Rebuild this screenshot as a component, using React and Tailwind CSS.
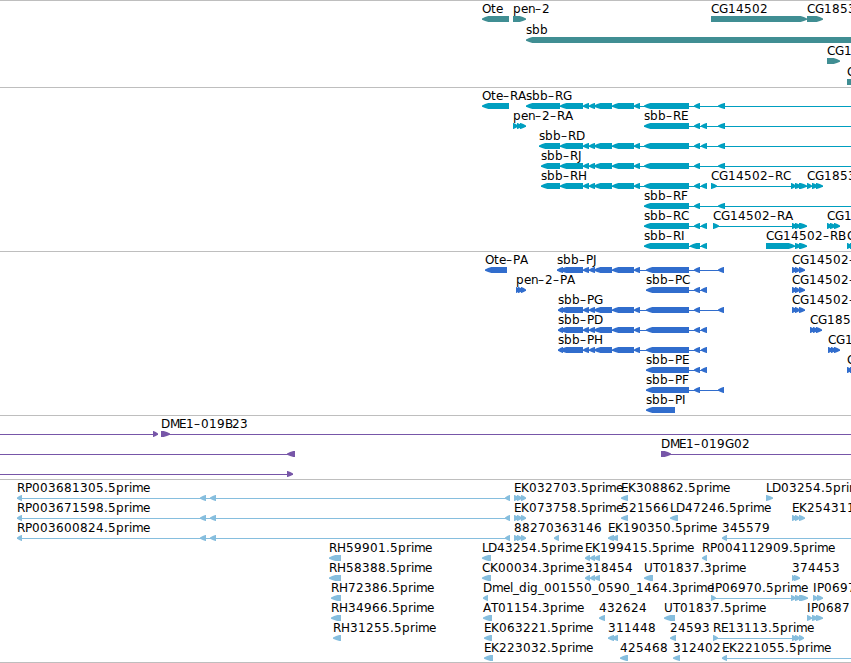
import React from "react";

const WIDTH = 851;
const END = 870;

// whole pixel glyph advances of the 12px label font
const ADVANCE = {
  A: 8, B: 7, C: 8, D: 9, E: 7, F: 7, G: 9, H: 9, I: 4, J: 4, K: 8, L: 6,
  M: 9, O: 9, P: 7, R: 8, T: 7, U: 9, a: 7, b: 8, d: 8, e: 7, g: 8, i: 3,
  l: 3, m: 11, n: 7, p: 8, r: 5, s: 6, t: 5, ".": 4, "-": 7, _: 6,
};

// exons shared by the long sbb transcripts
const SBB = [[560, 583], [583, 589], [589, 595], [594, 612], [612, 634], [634, 640]];
const RP = [[17, 22], [200, 206], [210, 216], [505, 510]];
const TRIO = [[792, 797], [795, 800], [799, 805]];
const EK = [[514, 519], [517, 522], [521, 526]];

// feature: [row, label, direction, blocks, line start, line end]
const tracks = [
  {
    name: "genes",
    color: "#408e93",
    height: 86,
    rowHeight: 21,
    features: [
      [0, "Ote", "left", [[482, 509]]],
      [0, "pen-2", "right", [[513, 526]]],
      [0, "CG14502", "right", [[711, 807]]],
      [0, "CG1853", "right", [[807, 823]]],
      [1, "sbb", "left", [[526, END]]],
      [2, "CG1", "right", [[827, 840]]],
      [3, "C", "right", [[847, END]]],
    ],
  },
  {
    name: "transcripts",
    color: "#009fc0",
    height: 163,
    rowHeight: 20,
    features: [
      [0, "Ote-RA", "left", [[482, 509]]],
      [0, "sbb-RG", "left", [[526, 560], ...SBB, [644, 689], [694, 700], [718, 725]], 526, END],
      [1, "pen-2-RA", "right", [[513, 518], [517, 522], [520, 526]]],
      [1, "sbb-RE", "left", [[644, 689], [694, 700], [701, 707], [718, 725]], 644, END],
      [2, "sbb-RD", "left", [[539, 560], ...SBB, [644, 689], [694, 700], [701, 707], [718, 725]], 539, END],
      [3, "sbb-RJ", "left", [[541, 560], ...SBB, [644, 689], [694, 700], [718, 725]], 541, END],
      [4, "sbb-RH", "left", [[541, 560], ...SBB, [644, 689], [694, 700], [701, 707]]],
      [4, "CG14502-RC", "right", [[711, 717], [791, 796], [795, 801], [799, 807]]],
      [4, "CG1853", "right", [[807, 812], [812, 818], [816, 823]]],
      [5, "sbb-RF", "left", [[644, 689], [694, 700], [718, 725]], 644, END],
      [6, "sbb-RC", "left", [[644, 689], [694, 700], [701, 707]]],
      [6, "CG14502-RA", "right", [[713, 719], [792, 797], [795, 801], [799, 807]]],
      [6, "CG1", "right", [[827, 832], [830, 836], [834, 840]]],
      [7, "sbb-RI", "left", [[644, 689], [690, 700], [701, 707]]],
      [7, "CG14502-RB", "right", [[766, 795], [795, 801], [799, 807]]],
      [7, "C", "right", [[847, 852], [850, 856]]],
    ],
  },
  {
    name: "proteins",
    color: "#316dcd",
    height: 163,
    rowHeight: 20,
    features: [
      [0, "Ote-PA", "left", [[485, 507]]],
      [0, "sbb-PJ", "left", [[557, 563], ...SBB, [646, 689], [694, 700], [718, 724]]],
      [0, "CG14502-", "right", TRIO],
      [1, "pen-2-PA", "right", [[516, 520], [518, 523], [521, 526]]],
      [1, "sbb-PC", "left", [[646, 689], [694, 700], [701, 707]]],
      [1, "CG14502-", "right", TRIO],
      [2, "sbb-PG", "left", [[558, 563], ...SBB, [646, 689], [694, 700], [718, 724]]],
      [2, "CG14502-", "right", TRIO],
      [3, "sbb-PD", "left", [[558, 563], ...SBB, [646, 689], [694, 700], [701, 707]]],
      [3, "CG185", "right", [[810, 815], [813, 818], [816, 822]]],
      [4, "sbb-PH", "left", [[558, 563], ...SBB, [646, 689], [694, 700], [701, 707]]],
      [4, "CG1", "right", [[828, 833], [831, 836], [834, 840]]],
      [5, "sbb-PE", "left", [[646, 689], [694, 700], [701, 707]]],
      [5, "C", "right", [[847, 852], [850, 856]]],
      [6, "sbb-PF", "left", [[646, 689], [694, 700], [718, 724]]],
      [7, "sbb-PI", "left", [[646, 675]]],
    ],
  },
  {
    name: "bacs",
    color: "#7756a8",
    height: 63,
    rowHeight: 20,
    features: [
      [0, "", "right", [[153, 158]], 0, 158],
      [0, "DME1-019B23", "right", [[161, 170]], 161, END],
      [1, "", "left", [[287, 295]], 0, 295],
      [1, "DME1-019G02", "right", [[661, 671]], 661, END],
      [2, "", "right", [[287, 293]], 0, 293],
    ],
  },
  {
    name: "ests",
    color: "#86bede",
    height: 182,
    rowHeight: 20,
    features: [
      [0, "RP003681305.5prime", "left", RP],
      [0, "EK032703.5prime", "right", EK],
      [0, "EK308862.5prime", "left", [[621, 628]]],
      [0, "LD03254.5prime", "right", [[766, 773]]],
      [1, "RP003671598.5prime", "left", RP],
      [1, "EK073758.5prime", "right", EK],
      [1, "521566", "left", [[621, 628]]],
      [1, "LD47246.5prime", "left", [[670, 678]]],
      [1, "EK254311", "right", TRIO],
      [2, "RP003600824.5prime", "left", RP],
      [2, "88270", "right", EK],
      [2, "363146", "left", [[554, 559]]],
      [2, "EK190350.5prime", "left", [[608, 614], [612, 618]]],
      [2, "345579", "left", [[722, 727]], 722, END],
      [3, "RH59901.5prime", "left", [[329, 341]]],
      [3, "LD43254.5prime", "left", [[482, 491]]],
      [3, "EK199415.5prime", "left", [[585, 590], [590, 595], [594, 600]]],
      [3, "RP004112909.5prime", "left", [[702, 707]]],
      [4, "RH58388.5prime", "left", [[329, 341]]],
      [4, "CK00034.3prime", "left", [[482, 491]]],
      [4, "318454", "left", [[585, 590], [590, 595], [594, 600]]],
      [4, "UT01837.3prime", "left", [[644, 653]]],
      [4, "374453", "right", [[792, 796], [794, 800]]],
      [5, "RH72386.5prime", "left", [[331, 341]]],
      [5, "Dmel_dig_001550_0590_1464.3prime", "left", [[483, 488]]],
      [5, "IP06970.5prime", "right", [[711, 716], [791, 796], [795, 801], [799, 808]]],
      [5, "IP0697", "right", [[813, 818], [817, 823]]],
      [6, "RH34966.5prime", "left", [[331, 341]]],
      [6, "AT01154.3prime", "left", [[483, 492]]],
      [6, "432624", "left", [[599, 605]]],
      [6, "UT01837.5prime", "left", [[664, 675]]],
      [6, "IP0687", "right", [[807, 812], [812, 818], [816, 823]]],
      [7, "RH31255.5prime", "left", [[333, 341]]],
      [7, "EK063221.5prime", "left", [[484, 492]]],
      [7, "311448", "left", [[608, 614], [612, 618]]],
      [7, "24593", "left", [[670, 676]]],
      [7, "RE13113.5prime", "right", [[713, 718], [792, 797], [795, 800], [799, 804]]],
      [8, "EK223032.5prime", "left", [[484, 493]]],
      [8, "425468", "left", [[620, 628]]],
      [8, "312402", "left", [[673, 680]]],
      [8, "EK221055.5prime", "left", [[722, 727]], 722, END],
    ],
  },
];

const glyphPositions = (label, start) => {
  let x = start;
  return label
    .split("")
    .map((ch) => {
      const pos = x;
      x += ADVANCE[ch] || 8;
      return pos;
    })
    .join(" ");
};

// rectangle with a slightly rounded arrow head, shared by both directions
const blockPoints = (a, b, top, direction) => {
  const head = Math.min(7, b - a);
  const sign = direction === "left" ? 1 : -1;
  const tip = direction === "left" ? a : b;
  const tail = direction === "left" ? b : a;
  const shoulder = tip + sign * head * 0.45;
  const neck = tip + sign * head * 0.9;
  return [
    [tip, top + 2.6],
    [shoulder, top + 1],
    [neck, top],
    [tail, top],
    [tail, top + 6],
    [neck, top + 6],
    [shoulder, top + 5],
    [tip, top + 3.8],
  ]
    .map((p) => p.join(","))
    .join(" ");
};

const Feature = ({ feature, rowHeight }) => {
  const [row, label, direction, blocks, from, to] = feature;
  const top = 15 + row * rowHeight;
  const start = blocks[0][0];
  const lineStart = from ?? start;
  const lineEnd = to ?? blocks[blocks.length - 1][1];
  const hasLine = to !== undefined || blocks.length > 1;

  return (
    <g>
      {hasLine && (
        <rect x={lineStart} y={top + 3} width={lineEnd - lineStart} height={1} />
      )}
      {blocks.map(([a, b]) => (
        <polygon key={a} points={blockPoints(a, b, top, direction)} />
      ))}
      {label && (
        <text x={glyphPositions(label, start)} y={top - 3} className="fill-black">
          {label.replaceAll("-", "–")}
        </text>
      )}
    </g>
  );
};

const Track = ({ track }) => (
  <section className="border-t border-[#bebebe]">
    <svg
      width={WIDTH}
      height={track.height}
      fill={track.color}
      className="block overflow-hidden font-['DejaVu_Sans',sans-serif] text-[12px]"
    >
      {track.features.map((feature, i) => (
        <Feature key={i} feature={feature} rowHeight={track.rowHeight} />
      ))}
    </svg>
  </section>
);

const App = () => {
  return (
    <main className="w-[851px] h-[663px] overflow-hidden bg-white border-b border-[#bebebe]">
      {tracks.map((track) => (
        <Track key={track.name} track={track} />
      ))}
    </main>
  );
};

export default App;
